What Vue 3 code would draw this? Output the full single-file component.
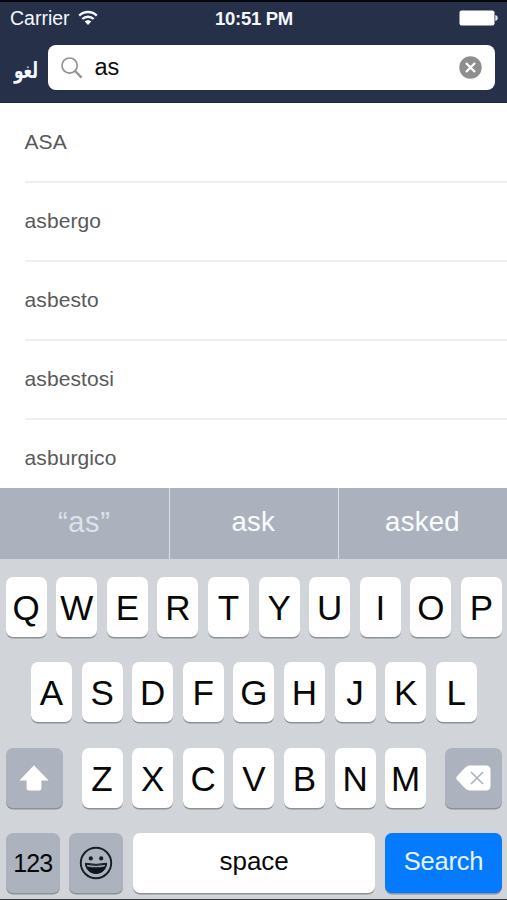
<script setup>
import { ref } from 'vue'

const query = ref('as')
const results = ['ASA', 'asbergo', 'asbesto', 'asbestosi', 'asburgico']
const suggestions = ['“as”', 'ask', 'asked']
const topRow = 'QWERTYUIOP'.split('')
const homeRow = 'ASDFGHJKL'.split('')
const lowerRow = 'ZXCVBNM'.split('')
</script>

<template>
  <main class="phone">
    <header class="header">
      <div class="status">
        <div class="carrier">
          <span class="carrier-name">Carrier</span>
          <svg class="wifi" width="20" height="16" viewBox="0 0 20 16">
            <path d="M1.2 5.6A12.6 12.6 0 0 1 18.8 5.6M4.3 9A8.3 8.3 0 0 1 15.7 9" fill="none" stroke="#f4f8ff" stroke-width="2.3" />
            <path d="M6.7 11.5A4.8 4.8 0 0 1 13.3 11.5L10 14.9Z" fill="#f4f8ff" />
          </svg>
        </div>
        <span class="clock">10:51 PM</span>
        <div class="battery-wrap">
          <svg class="battery" width="39" height="16" viewBox="0 0 39 16">
            <rect x="0.5" y="0.5" width="35" height="15" rx="2" fill="#fff" />
            <path d="M36.3 5Q38.8 5.5 38.8 8T36.3 11Z" fill="#e6ebf5" />
          </svg>
        </div>
      </div>
      <div class="search-bar">
        <span class="cancel" lang="fa" dir="rtl">لغو</span>
        <div class="field">
          <svg class="glass" width="22" height="22" viewBox="0 0 22 22" fill="none" stroke="#929294">
            <circle cx="8.6" cy="8.6" r="7.6" stroke-width="1.7" />
            <path d="M14 14L20.6 20.6" stroke-width="2.3" />
          </svg>
          <span class="query">{{ query }}</span>
          <svg class="clear" width="23" height="23" viewBox="0 0 23 23">
            <circle cx="11.5" cy="11.5" r="11.2" fill="#8e8e8f" />
            <path d="M7 7L16 16M16 7L7 16" stroke="#fff" stroke-width="2.3" />
          </svg>
        </div>
      </div>
    </header>

    <ul class="results">
      <li v-for="word in results" :key="word" class="result">{{ word }}</li>
    </ul>

    <div class="suggestions">
      <span v-for="word in suggestions" :key="word" class="suggestion">{{ word }}</span>
    </div>

    <section class="keyboard">
      <div class="row">
        <span v-for="k in topRow" :key="k" class="key letter">{{ k }}</span>
      </div>
      <div class="row">
        <span v-for="k in homeRow" :key="k" class="key letter">{{ k }}</span>
      </div>
      <div class="row spread">
        <span class="key dark shift">
          <svg width="30" height="26" viewBox="0 0 30 26">
            <path d="M15 .3L29.6 15.4H22.4V23.3Q22.4 25.5 20.2 25.5H9.8Q7.6 25.5 7.6 23.3V15.4H.4Z" fill="#fff" />
          </svg>
        </span>
        <div class="letters">
          <span v-for="k in lowerRow" :key="k" class="key letter">{{ k }}</span>
        </div>
        <span class="key dark shift">
          <svg width="35" height="26" viewBox="0 0 35 26">
            <path d="M1 11.2L9.5 2.2Q11.2.5 13.5.5H30Q34.5.5 34.5 5V21Q34.5 25.5 30 25.5H13.5Q11.2 25.5 9.5 23.8L1 14.8Q-.4 13 1 11.2Z" fill="#fff" />
            <path d="M15 7L27 19M27 7L15 19" stroke="#acb2bd" stroke-width="1.6" />
          </svg>
        </span>
      </div>
      <div class="row bottom">
        <span class="key dark small">123</span>
        <span class="key dark small">
          <svg width="34" height="34" viewBox="0 0 34 34">
            <circle cx="17" cy="17" r="15.2" fill="none" stroke="#171c24" stroke-width="1.9" />
            <circle cx="11.8" cy="12.4" r="2.1" fill="#171c24" />
            <circle cx="22.2" cy="12.4" r="2.1" fill="#171c24" />
            <path d="M6.3 17.2Q17 19.6 27.7 17.2C27.2 23.4 22.8 27.5 17 27.5S6.8 23.4 6.3 17.2Z" fill="#10151c" stroke="#171c24" stroke-width="1" />
            <path d="M7.8 18.7Q17 20.6 26.2 18.7L25.6 20.4Q17 22.2 8.4 20.4Z" fill="#9da4ae" />
          </svg>
        </span>
        <span class="key space">space</span>
        <span class="key go">Search</span>
      </div>
    </section>
  </main>
</template>

<style>
body {
  margin: 0;
  background: #fff;
}
</style>

<style scoped>
.phone {
  display: flex;
  flex-direction: column;
  box-sizing: border-box;
  width: 507px;
  height: 900px;
  overflow: hidden;
  border-top: 2px solid #05070c;
  border-bottom: 1px solid #35383d;
  font-family: "Liberation Sans", Arial, sans-serif;
  background: #fff;
}
.header {
  flex: none;
  box-sizing: border-box;
  height: 100.5px;
  background: #263149;
  border-bottom: 1px solid #1c263c;
}
.status {
  display: grid;
  grid-template-columns: 1fr auto 1fr;
  align-items: center;
  height: 32px;
  padding: 0 9px 0 10px;
  color: #f4f8ff;
}
.carrier {
  display: flex;
  align-items: center;
  gap: 8px;
}
.carrier-name {
  padding-top: 1px;
  font-size: 19.5px;
}
.clock {
  padding-top: 1px;
  font-size: 18.5px;
  font-weight: 700;
  letter-spacing: -0.3px;
}
.battery-wrap {
  display: flex;
  justify-content: flex-end;
}
.search-bar {
  display: flex;
  align-items: center;
  height: 45px;
  margin-top: 11.4px;
  padding-right: 12.5px;
}
.cancel {
  width: 48px;
  padding: 4px 10px 0 0;
  box-sizing: border-box;
  font: 700 17px "DejaVu Sans Condensed", "DejaVu Sans", sans-serif;
  font-stretch: condensed;
  color: #f4f8ff;
  transform: scaleY(1.3);
}
.field {
  flex: 1;
  display: flex;
  align-items: center;
  box-sizing: border-box;
  height: 45px;
  padding: 0 12.5px;
  border-radius: 8px;
  background: #fff;
}
.query {
  flex: 1;
  margin-left: 12px;
  font-size: 23.5px;
  color: #0c0c0c;
}
.results {
  flex: none;
  height: 385.5px;
  margin: 0;
  padding: 0 0 0 24.5px;
  overflow: hidden;
  list-style: none;
}
.result {
  box-sizing: border-box;
  height: 79px;
  border-bottom: 2px solid #efefef;
  line-height: 75px;
  font-size: 21px;
  letter-spacing: 0.1px;
  color: #595959;
}
.result:first-child {
  height: 80px;
  padding-top: 1px;
}
.suggestions {
  flex: none;
  display: grid;
  grid-template-columns: 168.5px 169.5px 169px;
  height: 71px;
  background: #abb2be;
}
.suggestion {
  display: flex;
  align-items: center;
  justify-content: center;
  box-sizing: border-box;
  padding: 0 1px 4px 0;
  font-size: 27.5px;
  letter-spacing: 0.3px;
  color: #fafcff;
}
.suggestion + .suggestion {
  border-left: 1px solid #dde1e7;
}
.suggestion:first-child {
  padding: 0 0 3px;
  font-size: 29px;
  letter-spacing: 0.7px;
  color: #dde2eb;
}
.keyboard {
  flex: 1;
  display: flex;
  flex-direction: column;
  gap: 25.4px;
  padding: 17.8px 5px 0 5.7px;
  background: #d1d5da;
}
.row {
  display: flex;
  justify-content: center;
  gap: 9.6px;
  height: 60px;
}
.spread {
  justify-content: space-between;
}
.letters {
  display: flex;
  gap: 9.6px;
}
.key {
  display: flex;
  align-items: center;
  justify-content: center;
  box-sizing: border-box;
  height: 60px;
  border-radius: 7px;
  background: #fff;
  box-shadow: 0 1.5px 0 #8d9198;
  color: #080808;
}
.letter {
  width: 41px;
  padding-top: 2px;
  font-size: 35px;
}
.dark {
  background: #acb3be;
}
.shift {
  width: 57px;
}
.small {
  width: 54px;
  padding-top: 1px;
  font-size: 25px;
  letter-spacing: -1px;
}
.space {
  flex: 1;
  padding-bottom: 2px;
  font-size: 26px;
}
.go {
  width: 117px;
  padding-bottom: 2px;
  background: #047bff;
  color: #e6f4ff;
  font-size: 25.5px;
  letter-spacing: -0.2px;
}
</style>
